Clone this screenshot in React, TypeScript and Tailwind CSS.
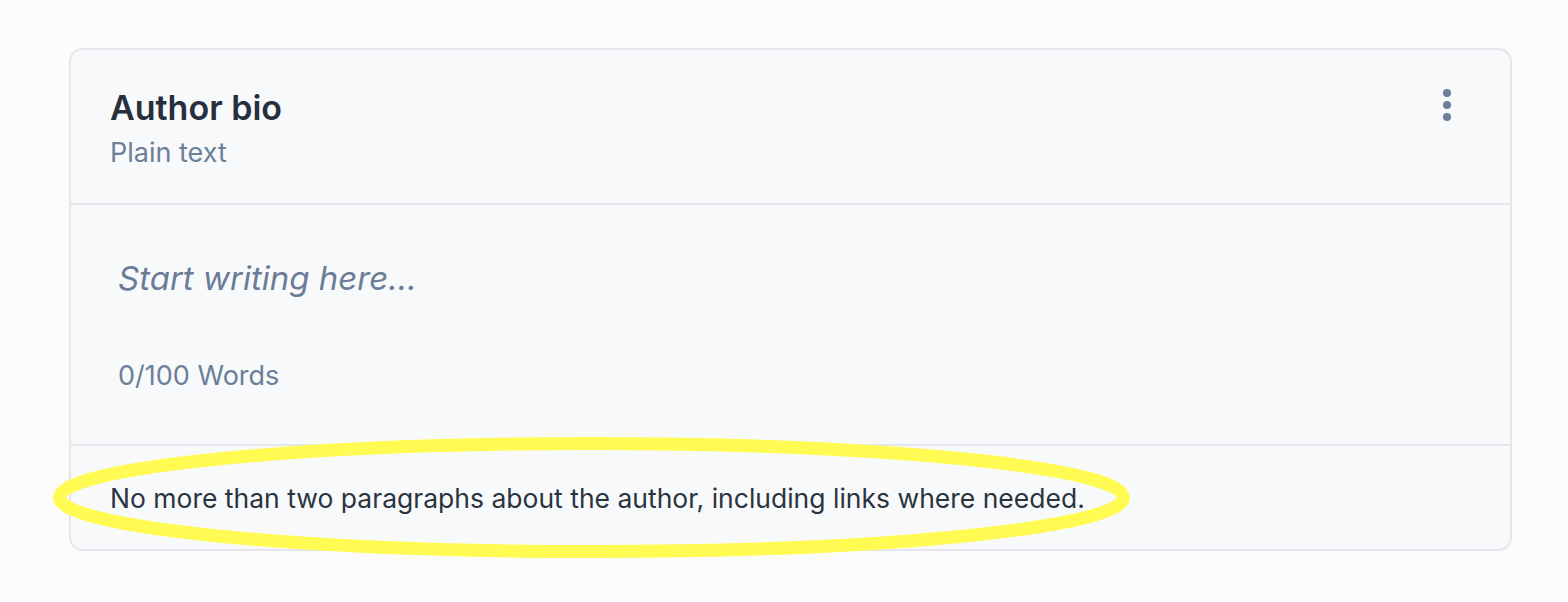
import React from "react";

export default function App() {
  return (
    <div
      className="relative w-[1568px] h-[602px] bg-[#fbfbfc] pt-[48px] pl-[69px]"
      style={{ fontFamily: 'Inter, "Noto Sans", sans-serif' }}
    >
      <div className="w-[1443px] h-[503px] rounded-[14px] border-2 border-[#e3e6eb] bg-[#f8f9fb] flex flex-col overflow-hidden">
        <div className="h-[155px] shrink-0 border-b-2 border-[#e3e6eb] flex items-start justify-between pl-[39px] pr-[59px] pt-[38px]">
          <div className="flex flex-col">
            <div className="text-[34px] leading-[40px] font-semibold text-[#262f3b]">Author bio</div>
            <div className="text-[27px] leading-[32px] text-[#6b7f99] mt-[9px]">Plain text</div>
          </div>
          <div className="flex flex-col gap-[4px] pt-[1px]">
            <span className="block w-[8px] h-[8px] rounded-full bg-[#6b7f99]" />
            <span className="block w-[8px] h-[8px] rounded-full bg-[#6b7f99]" />
            <span className="block w-[8px] h-[8px] rounded-full bg-[#6b7f99]" />
          </div>
        </div>
        <div className="h-[241px] shrink-0 border-b-2 border-[#e3e6eb] flex flex-col pl-[47px] pt-[53px]">
          <div className="text-[33px] leading-[40px] italic text-[#6b7c96]">Start writing here...</div>
          <div className="text-[27px] leading-[32px] text-[#6b7f99] mt-[62px]">0/100 Words</div>
        </div>
        <div className="flex-1 flex items-center pl-[39px]">
          <div className="text-[26.5px] leading-[32px] text-[#2a3440]">
            No more than two paragraphs about the author, including links where needed.
          </div>
        </div>
      </div>
      <svg
        className="absolute left-0 top-0 pointer-events-none"
        width="1568"
        height="602"
        viewBox="0 0 1568 602"
      >
        <ellipse cx="591.5" cy="497.5" rx="532" ry="54" fill="none" stroke="#fffb52" strokeWidth="13" />
      </svg>
    </div>
  );
}
